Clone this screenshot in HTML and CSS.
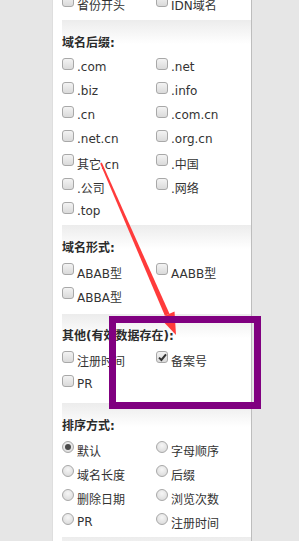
FILE: index.html
```html
<!doctype html>
<html>
<head>
<meta charset="utf-8">
<title>域名筛选</title>
<link rel="stylesheet" href="styles.css">
</head>
<body>
<div class="page">
  <div class="panel">
    <div class="sec sec_first">
      <div class="opts">
        <label class="opt"><span class="cb"></span>省份开头</label>
        <label class="opt"><span class="cb"></span>IDN域名</label>
      </div>
    </div>
    <div class="sec sec_suffix">
      <h3>域名后缀:</h3>
      <div class="opts">
        <label class="opt"><span class="cb"></span>.com</label>
        <label class="opt"><span class="cb"></span>.net</label>
        <label class="opt"><span class="cb"></span>.biz</label>
        <label class="opt"><span class="cb"></span>.info</label>
        <label class="opt"><span class="cb"></span>.cn</label>
        <label class="opt"><span class="cb"></span>.com.cn</label>
        <label class="opt"><span class="cb"></span>.net.cn</label>
        <label class="opt"><span class="cb"></span>.org.cn</label>
        <label class="opt"><span class="cb"></span>其它.cn</label>
        <label class="opt"><span class="cb"></span>.中国</label>
        <label class="opt"><span class="cb"></span>.公司</label>
        <label class="opt"><span class="cb"></span>.网络</label>
        <label class="opt"><span class="cb"></span>.top</label>
      </div>
    </div>
    <div class="sec sec_form">
      <h3>域名形式:</h3>
      <div class="opts">
        <label class="opt"><span class="cb"></span>ABAB型</label>
        <label class="opt"><span class="cb"></span>AABB型</label>
        <label class="opt"><span class="cb"></span>ABBA型</label>
      </div>
    </div>
    <div class="sec sec_other">
      <h3>其他(有效数据存在):</h3>
      <div class="opts">
        <label class="opt"><span class="cb"></span>注册时间</label>
        <label class="opt"><span class="cb checked"><svg width="9" height="9" viewBox="0 0 9 9"><path d="M1 4.6 L3.4 7 L8 1.4" fill="none" stroke="#333" stroke-width="2"/></svg></span>备案号</label>
        <label class="opt"><span class="cb"></span>PR</label>
      </div>
    </div>
    <div class="sec sec_sort">
      <h3>排序方式:</h3>
      <div class="opts">
        <label class="opt"><span class="rb checked"></span>默认</label>
        <label class="opt"><span class="rb"></span>字母顺序</label>
        <label class="opt"><span class="rb"></span>域名长度</label>
        <label class="opt"><span class="rb"></span>后缀</label>
        <label class="opt"><span class="rb"></span>删除日期</label>
        <label class="opt"><span class="rb"></span>浏览次数</label>
        <label class="opt"><span class="rb"></span>PR</label>
        <label class="opt"><span class="rb"></span>注册时间</label>
      </div>
    </div>
    <div class="sec sec_last"></div>
  </div>
  <!-- пометки поверх скриншота -->
  <svg class="marks" width="299" height="541" viewBox="0 0 299 541">
    <polygon points="100.2,163.4 101.8,162.6 169.5,313.8 164.9,315.8" fill="#ff3b3b"/>
    <polygon points="176,335 174.5,311.6 159.9,318" fill="#ff3b3b"/>
    <rect x="112.5" y="319.5" width="145" height="86" fill="none" stroke="#800080" stroke-width="7"/>
  </svg>
</div>
</body>
</html>
```

FILE: styles.css
```css
* {margin: 0; padding: 0;}
body {
  background: #e6e6e6;
  font-family: "DejaVu Sans", "Noto Sans CJK SC", sans-serif;
  font-size: 12px;
  color: #333;
  overflow: hidden;
}
.page {
  position: relative;
  height: 541px;
  overflow: hidden;
}
.panel {
  width: 198px;
  margin-left: 52px;
  margin-top: -8px;
  background: #fff;
  border-left: 1px solid #dedede;
  border-right: 1px solid #bdbdbd;
  height: 560px;
}
.sec {
  margin-left: 9px;
  background: linear-gradient(#ececec, #fff 24px);
}
.sec_first {
  background: #fff;
  padding-bottom: 4px;
}
.sec_suffix { padding: 15px 0 2px; }
.sec_form { padding: 15px 0 6px; }
.sec_other { padding: 14px 0 7px; }
.sec_sort { padding: 15px 0 3px; }
.sec_last { height: 20px; }
.sec h3 {
  font-size: 12px;
  line-height: 16px;
  font-weight: bold;
  color: #2b2b2b;
}
.opts {
  display: grid;
  grid-template-columns: 94px 94px;
  grid-auto-rows: 24px;
  margin-top: 4px;
}
.sec_first .opts { margin-top: 0; }
.opt {
  display: flex;
  align-items: center;
  white-space: nowrap;
}
.cb {
  box-sizing: border-box;
  width: 12px;
  height: 12px;
  margin: 0 3px 6px 0;
  border: 1px solid #a8a8a8;
  border-radius: 3px;
  background: linear-gradient(#f3f3f3, #dadada);
  display: flex;
  align-items: center;
  justify-content: center;
}
.cb svg { display: block; }
.rb {
  box-sizing: border-box;
  width: 12px;
  height: 12px;
  margin: 0 3px 6px 0;
  border: 1px solid #a8a8a8;
  border-radius: 50%;
  background: radial-gradient(circle at 50% 35%, #f6f6f6, #d6d6d6);
  display: flex;
  align-items: center;
  justify-content: center;
}
.rb.checked::after {
  content: "";
  width: 6px;
  height: 6px;
  border-radius: 50%;
  background: #4a4a4a;
}
.marks {
  position: absolute;
  left: 0;
  top: 0;
}
```
